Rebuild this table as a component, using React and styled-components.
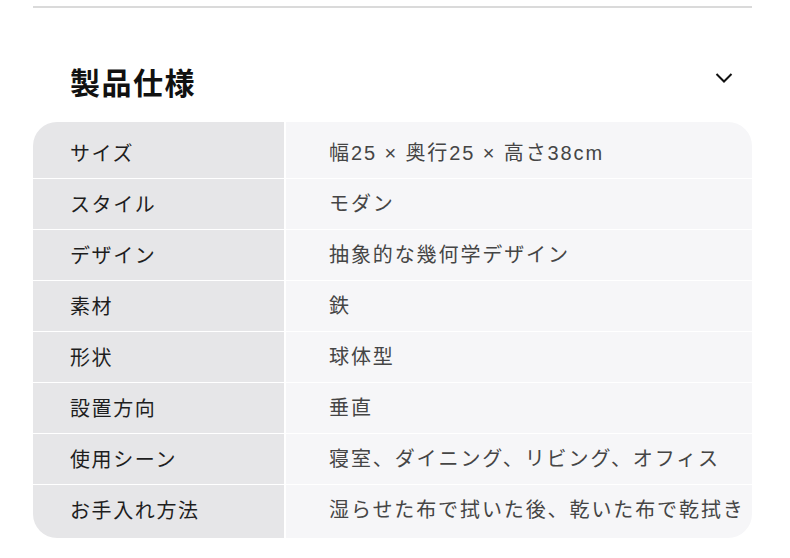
import React from "react";
import styled, { createGlobalStyle } from "styled-components";

const GlobalStyle = createGlobalStyle`
  body {
    margin: 0;
    background: #ffffff;
    font-family: "Noto Sans CJK JP", "Noto Sans", sans-serif;
  }
`;

const Page = styled.div`
  padding: 6px 38px 20px 33px;
`;

const TopRule = styled.div`
  height: 2px;
  background: #dadada;
`;

const Header = styled.div`
  display: flex;
  align-items: center;
  justify-content: space-between;
  padding: 54px 19px 0 37px;
  height: 40px;
  margin-bottom: 20px;
`;

const Title = styled.h2`
  margin: 0;
  font-size: 30px;
  line-height: 40px;
  font-weight: 700;
  letter-spacing: 1.5px;
  color: #111111;
  position: relative;
  top: -1px;
`;

const Chevron = styled.svg`
  width: 18px;
  height: 12px;
  margin-top: -8px;
`;

const Table = styled.div`
  display: grid;
  grid-template-columns: 251px 1fr;
  column-gap: 2px;
  border-radius: 24px;
  overflow: hidden;
`;

const Cell = styled.div`
  padding: ${(p) => (p.$first ? "20px" : "14px")} 0 ${(p) => (p.$last ? "17px" : "14px")};
  border-bottom: ${(p) => (p.$last ? "none" : "1px solid #ffffff")};
  line-height: 22px;
  font-size: 20px;
  white-space: nowrap;
  overflow: hidden;
`;

const Label = styled(Cell)`
  background: #e6e6e8;
  padding-left: 37px;
  color: #1e1e1e;
  letter-spacing: 1.6px;
`;

const Value = styled(Cell)`
  background: #f6f6f8;
  padding-left: 43px;
  color: #454545;
  font-family: "Liberation Sans", "Noto Sans CJK JP", sans-serif;
  letter-spacing: 1.9px;
`;

const specs = [
  ["サイズ", "幅25 × 奥行25 × 高さ38cm"],
  ["スタイル", "モダン"],
  ["デザイン", "抽象的な幾何学デザイン"],
  ["素材", "鉄"],
  ["形状", "球体型"],
  ["設置方向", "垂直"],
  ["使用シーン", "寝室、ダイニング、リビング、オフィス"],
  ["お手入れ方法", "湿らせた布で拭いた後、乾いた布で乾拭き"],
];

const App = () => {
  return (
    <>
      <GlobalStyle />
      <Page>
        <TopRule />
        <Header>
          <Title>製品仕様</Title>
          <Chevron viewBox="0 0 18 12">
            <polyline points="1.5,2 9,9.5 16.5,2" fill="none" stroke="#111" strokeWidth="2" />
          </Chevron>
        </Header>
        <Table>
          {specs.map(([k, v], i) => (
            <React.Fragment key={k}>
              <Label $first={i === 0} $last={i === specs.length - 1}>{k}</Label>
              <Value $first={i === 0} $last={i === specs.length - 1}>{v}</Value>
            </React.Fragment>
          ))}
        </Table>
      </Page>
    </>
  );
};

export default App;
